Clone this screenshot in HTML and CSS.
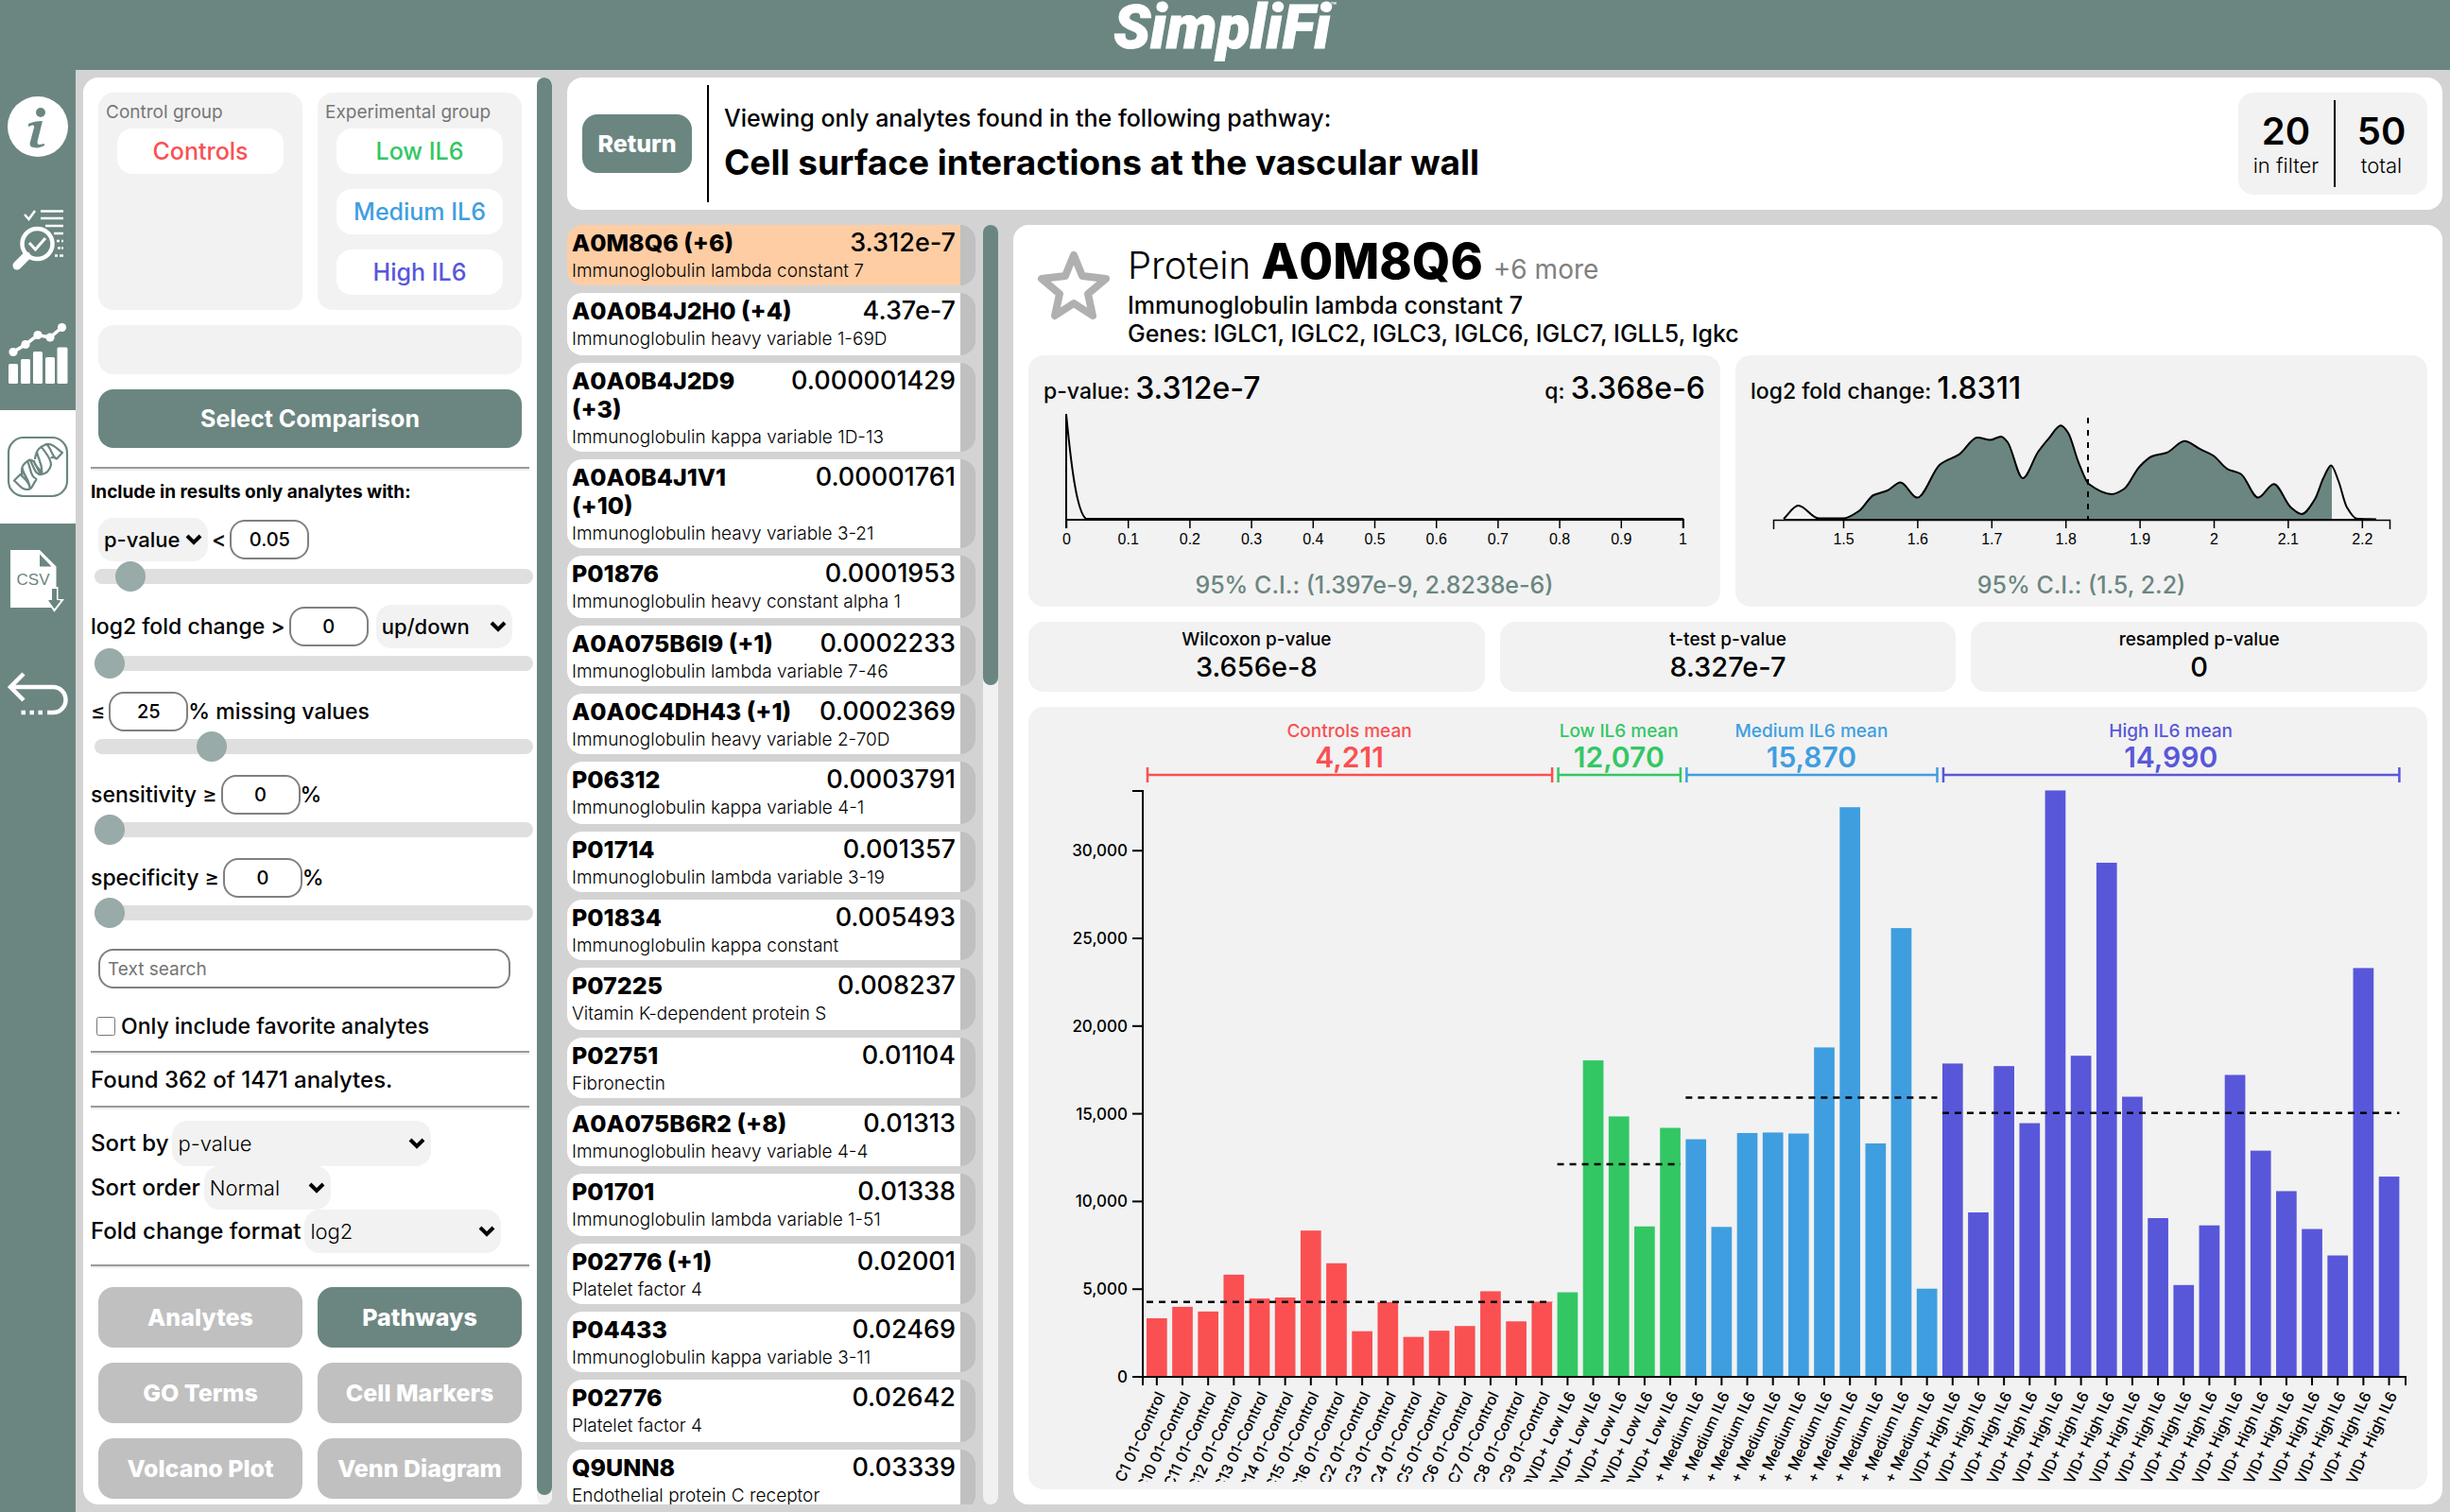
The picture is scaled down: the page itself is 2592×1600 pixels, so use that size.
FILE: index.html
```html
<!DOCTYPE html>
<html lang="en">
<head>
<meta charset="utf-8">
<title>SimpliFi</title>
<link rel="stylesheet" href="styles.css">
</head>
<body>
<header class="topbar">
  <span class="logo">SimpliFi</span><span class="logo-tm">™</span>
</header>
<div class="app">
  <nav class="sidebar" aria-label="Main">
    <a class="nav-item" href="#info" aria-label="Info">
      <svg viewBox="0 0 64 64"><circle cx="32" cy="32" r="32" fill="#fff"/><circle cx="35" cy="17" r="5" fill="#6b8681"/><path fill="#6b8681" d="M22 29c4-2 10-3 15-3l-5 20c-1 4 0 5 2 5l5-1v2c-4 2-8 3-11 2-4 0-5-3-4-6l4-15c1-2-1-3-3-2l-3 1z"/></svg>
    </a>
    <a class="nav-item" href="#review" aria-label="Quality review">
      <svg viewBox="0 0 64 64" fill="none" stroke="#fff"><circle cx="31.500" cy="36" r="16" stroke-width="4.500"/><path d="M20 49L10 59" stroke-width="9" stroke-linecap="round"/><path d="M23 35l6.500 7L40 30" stroke-width="3"/><path d="M18 5l4.500 5L29 1" stroke-width="2.500"/><path d="M35 1.500h24M35 9h24M40 17h19M49 25h10M52 33h3M57 33h2M53 40.500h3M57 40.500h2M50 48.500h3M55 48.500h4" stroke-width="2.500"/></svg>
    </a>
    <a class="nav-item" href="#charts" aria-label="Charts">
      <svg viewBox="0 0 64 64" fill="#fff"><rect x="1" y="43" width="10" height="21" rx="1.500"/><rect x="14" y="38" width="10" height="26" rx="1.500"/><rect x="27" y="30" width="10" height="34" rx="1.500"/><rect x="40" y="36" width="10" height="28" rx="1.500"/><rect x="52.500" y="25.500" width="11" height="38.500" rx="1.500"/><path d="M6 30.500L19 22.500 32 12.500 45 15 57.500 4.500" fill="none" stroke="#fff" stroke-width="3.500"/><circle cx="6" cy="30.500" r="4.600"/><circle cx="19" cy="22.500" r="4.600"/><circle cx="32" cy="12.500" r="4.600"/><circle cx="45" cy="15" r="4.600"/><circle cx="57.500" cy="4.500" r="4.600"/></svg>
    </a>
    <a class="nav-item nav-item--active" href="#analytes" aria-label="Analytes" aria-current="page">
      <svg viewBox="0 0 64 64" fill="none" stroke="#6b8681" stroke-width="2.200" stroke-linejoin="round"><rect x="1" y="1" width="62" height="62" rx="16"/><path d="M7 46.500L13.500 40C17 44 24 48 23.500 55.500 16 58 12 51 7 46.500zM23.500 55.500C27 54 27 49 31 45M15.500 41.500C14 34 15 29 23.500 24.500 30 24 31 37 36 40 29 41 28 32 23.500 24.500M15.500 33C17 42 24 46 23.500 55.500M21 26C25 34 24 43 31 45M28 25C28 33 35 33 37 39.500M29 24C30 14 34 11 41 8 49 7 53 14 58 17L52 23.500C47 22 46 11 41 8M36 40C42 39 45 34 46 30 46 22 39 16 36 11M31 16C32 24 38 30 36 40M46 23C47 21 49 22 52 23.500"/></svg>
    </a>
    <a class="nav-item" href="#csv" aria-label="Download CSV">
      <svg viewBox="0 0 64 64"><path fill="#fff" fill-rule="evenodd" d="M3 0h31l17.500 17.500V61H3zM34 4.500v13h12.500z"/><text class="csv-label" x="27" y="37" text-anchor="middle">CSV</text><path fill="#6b8681" stroke="#fff" stroke-width="2" d="M46 40h6.500v13H58L49.500 64 42 53h4z"/><path fill="#6b8681" d="M47 41h5v12h4l-7 8-6-8h4z"/></svg>
    </a>
    <a class="nav-item" href="#back" aria-label="Back">
      <svg viewBox="0 0 64 64" fill="none" stroke="#fff" stroke-width="4.500"><path d="M17 11L3 25l14 14M3 25h45a13.500 13.500 0 0 1 0 27h-6"/><path d="M14.500 52H19M23.500 52H28M32.500 52H37"/></svg>
    </a>
  </nav>

  <section class="filters-panel" aria-label="Filters">
    <form class="filters">
      <div class="groups inset">
        <div class="group"><h2 class="group-title">Control group</h2><div class="chip chip--red">Controls</div></div>
        <div class="group"><h2 class="group-title">Experimental group</h2><div class="chip chip--green">Low IL6</div><div class="chip chip--blue">Medium IL6</div><div class="chip chip--indigo">High IL6</div></div>
      </div>
      <div class="empty-slot inset"></div>
      <button class="btn btn--select inset" type="button">Select Comparison</button>
      <hr>
      <h3 class="filters-title">Include in results only analytes with:</h3>

      <div class="filter">
        <div class="filter-row filter-row--tall">
          <select class="select select--stat" aria-label="Statistic"><option>p-value</option></select>
          <label for="pv">&lt;</label><input class="num" id="pv" value="0.05">
        </div>
        <input class="slider" type="range" value="5" aria-label="p-value limit">
      </div>
      <div class="filter">
        <div class="filter-row filter-row--tall">
          <label for="fc">log2 fold change &gt;</label><input class="num" id="fc" value="0">
          <select class="select select--dir" aria-label="Direction"><option>up/down</option></select>
        </div>
        <input class="slider" type="range" value="0" aria-label="Fold change limit">
      </div>
      <div class="filter">
        <div class="filter-row">
          <label for="mv">≤</label><input class="num" id="mv" value="25"><span>% missing values</span>
        </div>
        <input class="slider" type="range" value="25" aria-label="Missing values limit">
      </div>
      <div class="filter">
        <div class="filter-row">
          <label for="sens">sensitivity ≥</label><input class="num" id="sens" value="0"><span>%</span>
        </div>
        <input class="slider" type="range" value="0" aria-label="Sensitivity limit">
      </div>
      <div class="filter">
        <div class="filter-row">
          <label for="spec">specificity ≥</label><input class="num" id="spec" value="0"><span>%</span>
        </div>
        <input class="slider" type="range" value="0" aria-label="Specificity limit">
      </div>

      <input class="search" type="text" placeholder="Text search" aria-label="Text search">
      <label class="favorite"><input type="checkbox">Only include favorite analytes</label>
      <hr>
      <p class="found">Found 362 of 1471 analytes.</p>
      <hr>
      <div class="sorting">
        <div class="sort-row sort-row--first"><label for="sortby">Sort by</label><select class="select select--light select--by" id="sortby"><option>p-value</option></select></div>
        <div class="sort-row"><label for="order">Sort order</label><select class="select select--light select--order" id="order"><option>Normal</option></select></div>
        <div class="sort-row"><label for="format">Fold change format</label><select class="select select--light select--format" id="format"><option>log2</option></select></div>
      </div>
      <hr>
      <div class="views inset">
        <button class="btn btn--muted" type="button">Analytes</button>
        <button class="btn" type="button">Pathways</button>
        <button class="btn btn--muted" type="button">GO Terms</button>
        <button class="btn btn--muted" type="button">Cell Markers</button>
        <button class="btn btn--muted" type="button">Volcano Plot</button>
        <button class="btn btn--muted" type="button">Venn Diagram</button>
      </div>
    </form>
    <div class="scrollbar"><div class="scrollbar-thumb scrollbar-thumb--filters"></div></div>
  </section>

  <main class="main">
    <section class="pathway">
      <button class="btn btn--return" type="button">Return</button>
      <div class="pathway-text">
        <p class="pathway-note">Viewing only analytes found in the following pathway:</p>
        <h1 class="pathway-name">Cell surface interactions at the vascular wall</h1>
      </div>
      <div class="counts">
        <div class="count"><strong>20</strong><span>in filter</span></div>
        <div class="count"><strong>50</strong><span>total</span></div>
      </div>
    </section>

    <div class="content">
      <div class="results">
        <ul class="analytes">
          <li class="analyte analyte--selected"><b>A0M8Q6 (+6)</b><data>3.312e-7</data><span>Immunoglobulin lambda constant 7</span></li>
          <li class="analyte"><b>A0A0B4J2H0 (+4)</b><data>4.37e-7</data><span>Immunoglobulin heavy variable 1-69D</span></li>
          <li class="analyte"><b>A0A0B4J2D9 (+3)</b><data>0.000001429</data><span>Immunoglobulin kappa variable 1D-13</span></li>
          <li class="analyte"><b>A0A0B4J1V1 (+10)</b><data>0.00001761</data><span>Immunoglobulin heavy variable 3-21</span></li>
          <li class="analyte"><b>P01876</b><data>0.0001953</data><span>Immunoglobulin heavy constant alpha 1</span></li>
          <li class="analyte"><b>A0A075B6I9 (+1)</b><data>0.0002233</data><span>Immunoglobulin lambda variable 7-46</span></li>
          <li class="analyte"><b>A0A0C4DH43 (+1)</b><data>0.0002369</data><span>Immunoglobulin heavy variable 2-70D</span></li>
          <li class="analyte"><b>P06312</b><data>0.0003791</data><span>Immunoglobulin kappa variable 4-1</span></li>
          <li class="analyte"><b>P01714</b><data>0.001357</data><span>Immunoglobulin lambda variable 3-19</span></li>
          <li class="analyte"><b>P01834</b><data>0.005493</data><span>Immunoglobulin kappa constant</span></li>
          <li class="analyte"><b>P07225</b><data>0.008237</data><span>Vitamin K-dependent protein S</span></li>
          <li class="analyte"><b>P02751</b><data>0.01104</data><span>Fibronectin</span></li>
          <li class="analyte"><b>A0A075B6R2 (+8)</b><data>0.01313</data><span>Immunoglobulin heavy variable 4-4</span></li>
          <li class="analyte"><b>P01701</b><data>0.01338</data><span>Immunoglobulin lambda variable 1-51</span></li>
          <li class="analyte"><b>P02776 (+1)</b><data>0.02001</data><span>Platelet factor 4</span></li>
          <li class="analyte"><b>P04433</b><data>0.02469</data><span>Immunoglobulin kappa variable 3-11</span></li>
          <li class="analyte"><b>P02776</b><data>0.02642</data><span>Platelet factor 4</span></li>
          <li class="analyte"><b>Q9UNN8</b><data>0.03339</data><span>Endothelial protein C receptor</span></li>
        </ul>
        <div class="scrollbar"><div class="scrollbar-thumb scrollbar-thumb--results"></div></div>
      </div>

      <article class="detail">
        <header class="detail-head">
          <button class="star" type="button" aria-label="Favorite"><svg viewBox="0 0 78 74"><path d="M39 5L48 27 73 30 54 46 59 69 39 56 19 69 24 46 5 30 30 27z" fill="none" stroke="#b0b0b0" stroke-width="8" stroke-linejoin="round"/></svg></button>
          <div>
            <h2 class="protein"><span class="protein-kind">Protein</span><b>A0M8Q6</b><span class="protein-more">+6 more</span></h2>
            <p class="detail-line">Immunoglobulin lambda constant 7</p>
            <p class="detail-line">Genes: IGLC1, IGLC2, IGLC3, IGLC6, IGLC7, IGLL5, Igkc</p>
          </div>
        </header>
        <div class="row">
          <section class="card">
            <div class="card-head"><p>p-value: <b>3.312e-7</b></p><p>q: <b>3.368e-6</b></p></div>
            <svg class="density" id="p-density" viewBox="0 0 700 160"></svg>
            <p class="interval">95% C.I.: (1.397e-9, 2.8238e-6)</p>
          </section>
          <section class="card">
            <div class="card-head"><p>log2 fold change: <b>1.8311</b></p></div>
            <svg class="density" id="fc-density" viewBox="0 0 700 160"></svg>
            <p class="interval">95% C.I.: (1.5, 2.2)</p>
          </section>
        </div>
        <div class="row">
          <section class="stat"><h3>Wilcoxon p-value</h3><p>3.656e-8</p></section>
          <section class="stat"><h3>t-test p-value</h3><p>8.327e-7</p></section>
          <section class="stat"><h3>resampled p-value</h3><p>0</p></section>
        </div>
        <section class="bars-card"><svg class="bars" id="bars" viewBox="0 0 1480 820"></svg></section>
      </article>
    </div>
  </main>
</div>
<script src="charts.js"></script>
</body>
</html>
```
FILE: styles.css
```css
:root {
  --teal: #6b8681;
  --soft: #f2f2f2;
  --page: #d3d3d3;
  --red: #fa5052;
  --green: #33c764;
  --blue: #3f9ee0;
  --indigo: #5857d9;
}
* { box-sizing: border-box; }
body {
  margin: 0;
  height: 100vh;
  display: flex;
  flex-direction: column;
  overflow: hidden;
  background: var(--page);
  color: #000;
  font: 500 24px/30px Inter, "Liberation Sans", sans-serif;
}
h1, h2, h3, p, ul { margin: 0; padding: 0; font-weight: inherit; font-size: inherit; }
button, input, select { font: inherit; color: inherit; margin: 0; }
b { font-weight: inherit; }

.topbar {
  height: 74px;
  flex: none;
  display: flex;
  justify-content: center;
  align-items: flex-start;
  background: var(--teal);
  color: #fff;
}
.logo { font: italic 900 64px/60px Roboto, sans-serif; -webkit-text-stroke: 1px #fff; }
.logo-tm { font-size: 10px; line-height: 12px; }

.app { flex: 1; min-height: 0; display: flex; }
.sidebar { width: 80px; flex: none; background: var(--teal); }
.nav-item { display: flex; height: 120px; align-items: center; justify-content: center; }
.nav-item--active { background: #fff; }
.nav-item svg { width: 64px; height: 64px; overflow: visible; }
.csv-label { font: 400 17px "Liberation Sans", sans-serif; fill: var(--teal); }

.scrollbar { width: 16px; flex: none; background: #f1f1f1; border-radius: 8px; }
.scrollbar-thumb { background: var(--teal); border-radius: 8px; }
.scrollbar-thumb--filters { height: calc(100% - 10px); }
.scrollbar-thumb--results { height: 36%; }

.filters-panel {
  width: 496px;
  flex: none;
  display: flex;
  margin: 8px 16px 8px 8px;
  background: #fff;
  border-radius: 16px 8px 8px 16px;
  overflow: hidden;
}
.filters { flex: 1; min-width: 0; display: flex; flex-direction: column; padding: 16px 8px 0; font-size: 23px; }
.filters > * { flex: none; }
.inset { margin-left: 8px; margin-right: 8px; }
.groups { display: grid; grid-template-columns: 1fr 1fr; gap: 16px; }
.group { min-width: 0; min-height: 230px; padding: 4px 8px 16px; background: var(--soft); border-radius: 16px; }
.group-title { font-size: 19px; font-weight: 400; line-height: 34px; color: #777; white-space: nowrap; }
.chip { height: 48px; margin: 0 12px 16px; border-radius: 16px; background: #fff; font-size: 25px; line-height: 48px; text-align: center; white-space: nowrap; }
.chip:last-child { margin-bottom: 0; }
.chip--red { color: var(--red); }
.chip--green { color: var(--green); }
.chip--blue { color: var(--blue); }
.chip--indigo { color: var(--indigo); }
.empty-slot { height: 52px; margin-top: 16px; background: var(--soft); border-radius: 16px; }
.btn { height: 64px; padding: 0; border: 0; border-radius: 16px; background: var(--teal); color: #fff; font-size: 25px; font-weight: 800; white-space: nowrap; }
.btn--muted { background: #c0c0c0; }
.btn--select { height: 62px; margin-top: 16px; margin-bottom: 20px; font-weight: 700; }
hr { width: 100%; height: 4px; margin: 0; border: solid; border-width: 2px 0; border-color: #9a9a9a transparent #eee; }
.filters-title { font-size: 19px; font-weight: 700; line-height: 46px; margin-bottom: 4px; }
.filter { margin-bottom: 14px; }
.filter-row { display: flex; align-items: center; height: 42px; gap: 4px; white-space: nowrap; }
.filter-row--tall { height: 46px; }
.filter-row span { margin-left: -4px; }
.num { width: 84px; height: 42px; padding: 0; border: 2px solid #808080; border-radius: 16px; background: #fff; font-size: 20px; text-align: center; }
.select {
  height: 46px;
  padding: 0 6px;
  border: 0;
  border-radius: 16px;
  appearance: none;
  font-size: 22px;
  background: var(--soft) url("data:image/svg+xml,%3Csvg xmlns='http://www.w3.org/2000/svg' viewBox='0 0 18 12'%3E%3Cpath d='M2 2l7 7 7-7' fill='none' stroke='%23000' stroke-width='4'/%3E%3C/svg%3E") no-repeat right 6px center / 18px 12px;
}
.select--stat { width: 116px; margin-left: 8px; }
.select--dir { width: 144px; margin-left: 4px; }
.select--light { font-weight: 300; }
.select--by { width: 274px; height: 48px; }
.select--order { width: 134px; }
.select--format { width: 208px; }
.slider { display: block; appearance: none; width: 464px; height: 32px; margin-left: 4px; background: none; }
.slider::-webkit-slider-runnable-track { height: 16px; border-radius: 8px; background: #dfdfdf; }
.slider::-webkit-slider-thumb { appearance: none; width: 32px; height: 32px; margin-top: -8px; border-radius: 50%; background: #98aba8; }
.search { height: 42px; margin: 8px 20px 14px 8px; padding: 0 8px; border: 2px solid #808080; border-radius: 16px; font-size: 19px; font-weight: 400; }
.search::placeholder { color: #757575; }
.favorite { display: flex; align-items: center; line-height: 52px; }
.favorite input { width: 20px; height: 20px; margin: 0 6px; }
.found { font-size: 24px; line-height: 54px; }
.sorting { padding: 12px 0; font-size: 24px; }
.sort-row { display: flex; align-items: center; gap: 4px; height: 46px; white-space: nowrap; }
.sort-row--first { height: 48px; }
.views { display: grid; grid-template-columns: 1fr 1fr; gap: 16px; margin-top: 20px; }

.main { flex: 1; min-width: 0; display: flex; flex-direction: column; gap: 16px; padding: 8px 8px 8px 0; }
.pathway { display: flex; align-items: center; height: 140px; flex: none; padding: 8px 16px; background: #fff; border-radius: 16px; }
.btn--return { width: 116px; height: 62px; }
.pathway-text { flex: 1; align-self: stretch; margin-left: 16px; padding: 20px 0 0 16px; border-left: 2px solid #000; }
.pathway-note { font-size: 25px; }
.pathway-name { margin-top: 9px; font-size: 37px; font-weight: 700; line-height: 46px; }
.counts { display: flex; height: 108px; padding: 8px 0; background: var(--soft); border-radius: 16px; text-align: center; }
.count { width: 97px; padding-top: 12px; font-size: 22px; font-weight: 300; }
.count:first-child { width: 103px; border-right: 2px solid #000; }
.count strong, .count span { display: block; }
.count strong { font-size: 40px; line-height: 42px; font-weight: 600; }

.content { flex: 1; min-height: 0; display: flex; gap: 16px; }
.results { width: 456px; flex: none; display: flex; gap: 8px; }
.analytes { flex: 1; display: flex; flex-direction: column; gap: 8px; overflow: hidden; list-style: none; }
.analyte {
  flex: none;
  display: grid;
  grid-template-columns: 1fr auto;
  column-gap: 26px;
  padding: 4px 5px 0;
  background: #fff;
  border-right: 16px solid #c0c0c0;
  border-radius: 16px;
}
.analyte:nth-child(3n+2) { padding-bottom: 2px; }
.analyte--selected { background: #ffcda4; }
.analyte b { font-size: 25px; font-weight: 800; }
.analyte data { font-size: 27px; }
.analyte span { grid-column: 1 / -1; font-size: 19px; font-weight: 300; white-space: nowrap; }

.detail { flex: 1; min-width: 0; display: flex; flex-direction: column; gap: 16px; padding: 8px 16px 16px; background: #fff; border-radius: 16px; }
.detail-head { display: flex; align-items: flex-start; gap: 18px; height: 114px; }
.star { width: 78px; height: 74px; margin: 19px 0 0 9px; padding: 0; border: 0; background: none; }
.star svg { display: block; }
.protein { display: flex; align-items: baseline; gap: 11px; height: 62px; line-height: 62px; white-space: nowrap; }
.protein-kind { font-size: 40px; font-weight: 300; }
.protein b { font-size: 52px; font-weight: 800; }
.protein-more { font-size: 28px; font-weight: 400; color: #808080; }
.detail-line { font-size: 25px; }
.row { display: flex; gap: 16px; }
.card { flex: 1; height: 266px; padding: 16px; background: var(--soft); border-radius: 16px; }
.card-head { display: flex; justify-content: space-between; height: 38px; font-size: 23px; line-height: 38px; }
.card-head b { font-size: 32px; }
.density { display: block; width: 100%; height: 160px; }
.interval { margin-top: 14px; color: var(--teal); font-size: 25px; text-align: center; }
.stat { flex: 1; height: 74px; padding-top: 6px; background: var(--soft); border-radius: 16px; text-align: center; }
.stat h3 { font-size: 19px; line-height: 26px; }
.stat p { font-size: 29px; line-height: 32px; }
.bars-card { flex: 1; min-height: 0; background: var(--soft); border-radius: 16px; }
.bars { display: block; width: 100%; }
.density text { font: 400 16px "Liberation Sans", sans-serif; text-anchor: middle; }
.bars .y-label { font-size: 17px; text-anchor: end; }
.bars .x-label { font-size: 16px; text-anchor: end; }
.bars .mean-label { font-size: 19px; text-anchor: middle; }
.bars .mean-value { font-size: 30px; font-weight: 600; text-anchor: middle; }
```
FILE: charts.js
```js
const NS = 'http://www.w3.org/2000/svg';
function add(parent, tag, attrs, text) {
  const el = document.createElementNS(NS, tag);
  for (const k in attrs) el.setAttribute(k, attrs[k]);
  if (text !== undefined) el.textContent = text;
  parent.appendChild(el);
  return el;
}

// Monotone cubic curve through the points, so peaks never overshoot.
function smooth(pts) {
  const n = pts.length, s = [], m = [];
  for (let i = 0; i < n - 1; i++) s.push((pts[i + 1][1] - pts[i][1]) / (pts[i + 1][0] - pts[i][0]));
  for (let i = 0; i < n; i++) {
    if (i === 0) m.push(s[0]);
    else if (i === n - 1) m.push(s[n - 2]);
    else if (s[i - 1] * s[i] <= 0) m.push(0);
    else m.push(2 * s[i - 1] * s[i] / (s[i - 1] + s[i]));
  }
  let d = 'M' + pts[0].join(' ');
  for (let i = 0; i < n - 1; i++) {
    const [x0, y0] = pts[i], [x1, y1] = pts[i + 1], h = (x1 - x0) / 3;
    d += `C${x0 + h} ${y0 + m[i] * h} ${x1 - h} ${y1 - m[i + 1] * h} ${x1} ${y1}`;
  }
  return d;
}

const stroke = (w) => ({ fill: 'none', stroke: '#000', 'stroke-width': w });

const p = document.getElementById('p-density');
add(p, 'path', { d: 'M24 120V8C29 60 35 112 45 119H677', ...stroke(2) });
add(p, 'path', { d: 'M24 129V120H677V129', ...stroke(2) });
for (let i = 0; i <= 10; i++) {
  const x = 24.5 + i * 65.2;
  add(p, 'path', { d: `M${x} 120v9`, ...stroke(1.5) });
  add(p, 'text', { x, y: 146 }, String(i / 10));
}

const fc = document.getElementById('fc-density');
const curve = [[35,119],[50.5,105],[72,118.5],[98,118.5],[115,110.5],[130,94],[145,89],[158.6,80.6],[176.3,96.6],[200.5,61.5],[221,50.6],[240,33],[253.6,35.5],[265,32],[272,38],[288,76],[304,48.5],[316,33.3],[328.3,20.3],[336,28],[347,59.3],[358,82.3],[382,93],[395,87.5],[411.6,63.7],[425,52.8],[440.4,49],[459,36.8],[476,45.4],[489.4,52],[504.6,66.3],[518.7,71.5],[537,96.6],[553.6,82.3],[571.7,107],[583,114],[597,98.3],[606,76],[614.2,62.4],[622,79],[631,107],[641,118.7],[662,119.5]];
const clip = add(fc, 'clipPath', { id: 'ci' });
add(clip, 'rect', { x: 98, y: 0, width: 517, height: 120 });
add(fc, 'path', { d: smooth(curve) + 'V120H35z', fill: '#6b8681', 'clip-path': 'url(#ci)' });
add(fc, 'path', { d: smooth(curve), ...stroke(2) });
add(fc, 'path', { d: 'M35 119.500H662', ...stroke(1) });
add(fc, 'path', { d: 'M24.500 130V120.500H676.500V130', ...stroke(1.5) });
add(fc, 'path', { d: 'M357 12V120', 'stroke-dasharray': '6 7', ...stroke(2) });
['1.5', '1.6', '1.7', '1.8', '1.9', '2', '2.1', '2.2'].forEach((t, i) => {
  const x = 98.5 + i * 78.4;
  add(fc, 'path', { d: `M${x} 120v9`, ...stroke(1.5) });
  add(fc, 'text', { x, y: 146 }, t);
});

const groups = [
  { name: 'Controls', mean: 4211, color: '#fa5052', values: [3343,3993,3727,5827,4467,4526,8342,6478,2603,4260,2278,2633,2899,4881,3165,4289],
    labels: ['C1','C10','C11','C12','C13','C14','C15','C16','C2','C3','C4','C5','C6','C7','C8','C9'].map(c => c + ' 01-Control') },
  { name: 'Low IL6', mean: 12070, color: '#33c764', values: [4822,18044,14849,8578,14198] },
  { name: 'Medium IL6', mean: 15870, color: '#3f9ee0', values: [13548,8549,13903,13932,13873,18783,32479,13311,25587,5029] },
  { name: 'High IL6', mean: 14990, color: '#5857d9', values: [17866,9377,17719,14465,33435,18310,29314,15973,9052,5236,8637,17216,12897,10590,8430,6922,23309,11418] }
];
const bars = document.getElementById('bars');
const left = 125, base = 709, pitch = 27.16, band = 21.7;
const y = v => base - v * 0.01856;
const x = i => left + i * pitch;
const overlay = [];
let i = 0;
for (const g of groups) {
  const x0 = x(i), x1 = x(i + g.values.length - 1) + band, mid = (x0 + x1) / 2;
  g.values.forEach((v, k) => {
    const bx = x(i), cx = bx + band / 2;
    add(bars, 'rect', { x: bx, y: y(v), width: band, height: base - y(v), fill: g.color });
    add(bars, 'path', { d: `M${cx} ${base}v9`, ...stroke(2) });
    add(bars, 'text', { class: 'x-label', transform: `translate(${cx + 9} 728) rotate(-65)` }, g.labels ? g.labels[k] : 'COVID+ ' + g.name);
    i++;
  });
  overlay.push([x0, x1, y(g.mean) - 1]);
  add(bars, 'text', { class: 'mean-label', x: mid, y: 32, fill: g.color }, g.name + ' mean');
  add(bars, 'text', { class: 'mean-value', x: mid, y: 64, fill: g.color }, g.mean.toLocaleString('en-US'));
  add(bars, 'path', { d: `M${x0 + 1} 64v16M${x1} 64v16M${x0} 72H${x1}`, fill: 'none', stroke: g.color, 'stroke-width': 2.5 });
}
for (const [x0, x1, my] of overlay) add(bars, 'path', { d: `M${x0} ${my}H${x1}`, 'stroke-dasharray': '7 6', ...stroke(2.5) });
add(bars, 'path', { d: 'M110 89H121V718M110 709H1457V718', ...stroke(2) });
for (let v = 0; v <= 30000; v += 5000) {
  add(bars, 'path', { d: `M110 ${y(v)}h11`, ...stroke(2) });
  add(bars, 'text', { class: 'y-label', x: 105, y: y(v) + 6 }, v.toLocaleString('en-US'));
}
```
